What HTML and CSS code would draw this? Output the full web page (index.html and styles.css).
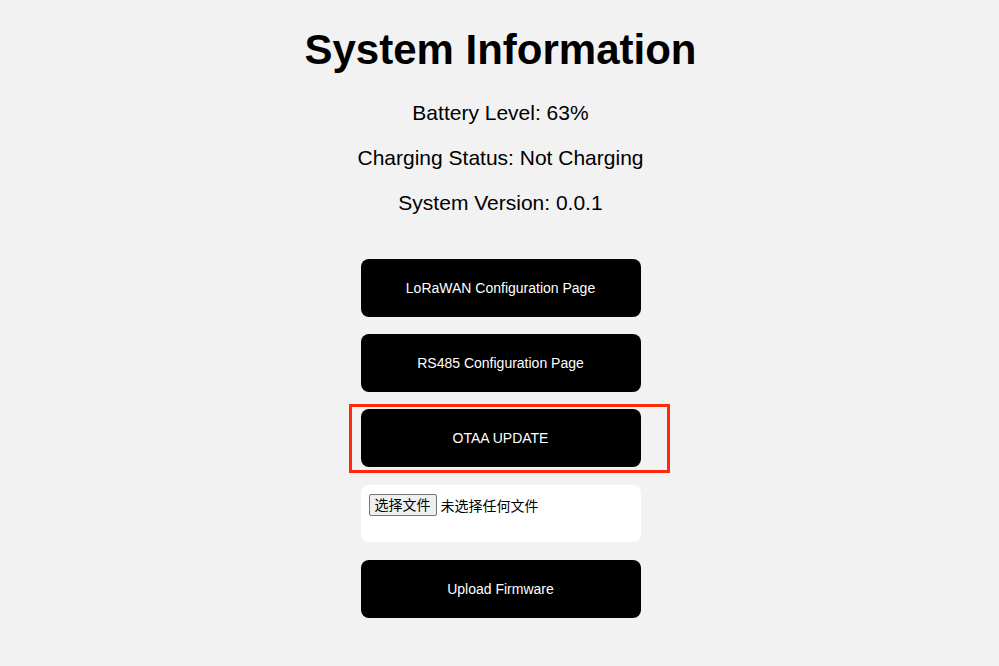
FILE: index.html
```html
<!DOCTYPE html>
<html lang="zh">
<head>
<meta charset="utf-8">
<title>System Information</title>
<link rel="stylesheet" href="styles.css">
</head>
<body>
<main class="page">
  <h1 class="title">System Information</h1>
  <p class="info">Battery Level: 63%</p>
  <p class="info">Charging Status: Not Charging</p>
  <p class="info">System Version: 0.0.1</p>
  <div class="actions">
    <button class="btn" type="button">LoRaWAN Configuration Page</button>
    <button class="btn" type="button">RS485 Configuration Page</button>
    <div class="highlight-wrap">
      <button class="btn" type="button">OTAA UPDATE</button>
      <span class="highlight"></span>
    </div>
    <form class="upload-form">
      <div class="file-box">
        <label class="file-pick"><span class="file-btn">选择文件</span><span class="file-name">未选择任何文件</span></label>
      </div>
      <button class="btn upload" type="button">Upload Firmware</button>
    </form>
  </div>
</main>
</body>
</html>
```
FILE: styles.css
```css
html, body {
  margin: 0;
  padding: 0;
  background: #f2f2f2;
}
body {
  font-family: "Liberation Sans", Arial, sans-serif;
  color: #000;
}
.page {
  display: flex;
  flex-direction: column;
  align-items: center;
  padding-top: 22px;
  padding-left: 2px;
}
.title {
  font-size: 42px;
  font-weight: bold;
  margin: 0 0 23px;
  line-height: 56px;
}
.info {
  font-size: 21px;
  line-height: 24px;
  margin: 0 0 21px;
}
.actions {
  display: flex;
  flex-direction: column;
  align-items: center;
  gap: 17px;
  margin-top: 23px;
}
.btn {
  width: 280px;
  height: 58px;
  background: #000;
  color: #fff;
  border: none;
  border-radius: 8px;
  font-family: "Liberation Sans", Arial, sans-serif;
  font-size: 14px;
  padding: 0;
  cursor: pointer;
}
.highlight-wrap {
  position: relative;
  display: flex;
}
.highlight {
  position: absolute;
  left: -12px;
  top: -5px;
  width: 321px;
  height: 69px;
  box-sizing: border-box;
  border: 3px solid #ff2a0a;
  pointer-events: none;
}
.upload-form {
  display: flex;
  flex-direction: column;
  gap: 18px;
  margin-top: 1px;
}
.file-box {
  width: 280px;
  height: 57px;
  box-sizing: border-box;
  background: #fff;
  border-radius: 8px;
  padding: 9px 8px;
}
.file-pick {
  display: flex;
  align-items: center;
  font-family: "Liberation Sans", "Noto Sans CJK SC", sans-serif;
  font-size: 14px;
}
.file-btn {
  display: inline-block;
  box-sizing: border-box;
  height: 22px;
  line-height: 18px;
  padding: 1px 5px;
  border: 1px solid #767676;
  border-radius: 2px;
  background: #efefef;
  color: #000;
  margin-right: 4px;
}
.file-name {
  color: #000;
}
```
